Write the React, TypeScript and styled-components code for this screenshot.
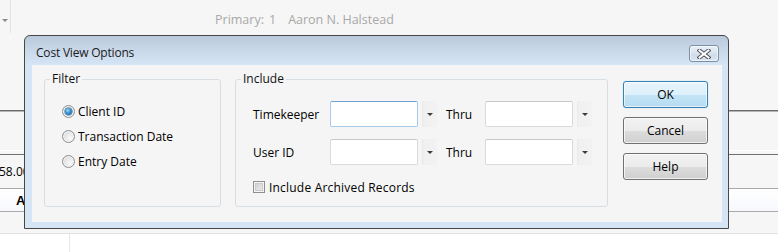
import React from "react";
import styled, { createGlobalStyle } from "styled-components";

const Global = createGlobalStyle`
  html, body { margin: 0; padding: 0; }
  body {
    background: #f6f6f6;
    font-family: "Open Sans", "Noto Sans", "DejaVu Sans", sans-serif;
    font-size: 12px;
    color: #000;
  }
  * { box-sizing: border-box; }
`;

const Page = styled.div`
  position: relative;
  width: 778px;
  height: 252px;
  overflow: hidden;
  background: #f6f6f6;
`;

/* ---------- background application ---------- */
const Backdrop = styled.div`
  display: flex;
  flex-direction: column;
  height: 100%;
`;

const TopBar = styled.div`
  display: flex;
  align-items: flex-start;
  height: 110px;
`;

const ComboStub = styled.div`
  width: 11px;
  height: 33px;
  border-right: 1px solid #e4e4e4;
  display: flex;
  align-items: center;
  justify-content: center;
  padding-top: 8px;
`;

const SmallArrow = styled.span`
  width: 0;
  height: 0;
  border-left: 3px solid transparent;
  border-right: 3px solid transparent;
  border-top: 3px solid #8a8a8a;
`;

const PrimaryLine = styled.div`
  display: flex;
  margin-left: 204px;
  padding-top: 10px;
  font-size: 12.5px;
  line-height: 20px;
  color: #a8a8a8;
`;

const PrimaryPart = styled.span<{ $gap: number }>`
  margin-left: ${(p) => p.$gap}px;
`;

const Rule = styled.div<{ $color: string; $under?: string }>`
  height: ${(p) => (p.$under ? 2 : 1)}px;
  border-top: 1px solid ${(p) => p.$color};
  ${(p) => (p.$under ? `border-bottom: 1px solid ${p.$under};` : "")}
`;

const Gap = styled.div<{ $h: number }>`
  height: ${(p) => p.$h}px;
`;

const DataRow = styled.div`
  height: 33px;
  display: flex;
  align-items: center;
  font-size: 12px;
  margin-left: -1px;
`;

const HeaderRow = styled.div`
  height: 22px;
  display: flex;
  align-items: center;
  padding-left: 16px;
  background: linear-gradient(#ffffff, #f7f8fc);
  font-weight: bold;
  font-size: 13px;
  font-family: "Liberation Sans", Arial, sans-serif;
`;

const Grid = styled.div`
  flex: 1;
  display: flex;
  background: #ffffff;
`;

const GridCell = styled.div`
  width: 70px;
  border-right: 1px solid #e6e6e6;
`;

/* ---------- dialog ---------- */
const Dialog = styled.div`
  position: absolute;
  left: 24px;
  top: 35px;
  width: 705px;
  height: 194px;
  display: flex;
  flex-direction: column;
  border: 1px solid #474747;
  border-radius: 6px 6px 0 0;
  background: linear-gradient(#b9c8da 0px, #c9d8e9 14px, #d6e5f5 29px, #d6e5f5 100%);
`;

const TitleBar = styled.div`
  height: 29px;
  flex: none;
  display: flex;
  align-items: flex-start;
  justify-content: space-between;
  padding: 9px 9px 0 11px;
`;

const Title = styled.div`
  font-size: 12px;
  line-height: 16px;
  color: #1b1b1b;
  letter-spacing: -0.2px;
`;

const CloseButton = styled.div`
  width: 30px;
  height: 17px;
  border: 1px solid #7d8fa6;
  border-radius: 3px;
  background: linear-gradient(#e9eff7, #d9e3ef 50%, #cfdbea 51%, #d9e4f1);
  box-shadow: inset 0 0 0 1px rgba(255, 255, 255, 0.55);
  display: flex;
  align-items: center;
  justify-content: center;
`;

const Body = styled.div`
  flex: 1;
  margin: 0 6px 6px 7px;
  background: #f5f5f5;
  display: flex;
  align-items: flex-start;
  padding: 6px 0 0 12px;
  gap: 14px;
`;

const Group = styled.fieldset<{ $w: number }>`
  width: ${(p) => p.$w}px;
  height: 136px;
  margin: 0;
  padding: 0;
  border: 1px solid #d6dde3;
  border-radius: 3px;
  min-width: 0;
`;

const Legend = styled.legend`
  margin-left: 5px;
  padding: 0 2px;
  font-size: 12px;
  line-height: 16px;
  color: #111;
`;

const RadioList = styled.div`
  display: flex;
  flex-direction: column;
  padding: 12px 0 0 17px;
`;

const RadioRow = styled.label`
  height: 25px;
  display: flex;
  align-items: center;
  gap: 3px;
  font-size: 12px;
`;

const RadioCircle = styled.span<{ $checked?: boolean }>`
  width: 13px;
  height: 13px;
  border-radius: 50%;
  border: 1px solid #8c8e90;
  flex: none;
  display: flex;
  align-items: center;
  justify-content: center;
  background: radial-gradient(circle at 65% 65%, #f9f9f9 0%, #e9e9e9 45%, #cfcfcf 100%);
  box-shadow: inset 0 0 0 1px #f4f4f4;
  &::after {
    content: "";
    display: ${(p) => (p.$checked ? "block" : "none")};
    width: 7px;
    height: 7px;
    border-radius: 50%;
    background: radial-gradient(circle at 40% 35%, #a8dcff 0%, #3a96d6 40%, #11598f 100%);
    box-shadow: 0 0 0 0.5px #2b5f86;
  }
`;

const IncludeContent = styled.div`
  display: flex;
  flex-direction: column;
  padding: 14px 0 0 17px;
`;

const FieldRow = styled.div`
  display: flex;
  align-items: center;
  height: 26px;
  margin-bottom: 12px;
`;

const FieldLabel = styled.span<{ $w: number }>`
  width: ${(p) => p.$w}px;
  flex: none;
  font-size: 12px;
`;

const TextBox = styled.input<{ $focused?: boolean }>`
  width: 88px;
  height: 26px;
  flex: none;
  margin: 0;
  padding: 0 3px;
  background: #fff;
  font: inherit;
  border: 1px solid ${(p) => (p.$focused ? "#a9cbe9" : "#dadada")};
  border-top-color: ${(p) => (p.$focused ? "#6fa3d1" : "#c9c9c9")};
  border-radius: 2px;
  outline: none;
`;

const DropButton = styled.div`
  width: 15px;
  height: 26px;
  flex: none;
  margin: 0 9px 0 4px;
  background: linear-gradient(90deg, #e9e9e9, #f0f0f0 2px, #f2f2f2);
  display: flex;
  align-items: center;
  justify-content: center;
  &::after {
    content: "";
    width: 0;
    height: 0;
    border-left: 3px solid transparent;
    border-right: 3px solid transparent;
    border-top: 3px solid #3c3c3c;
  }
`;

const CheckRow = styled.label`
  display: flex;
  align-items: center;
  gap: 4px;
  height: 16px;
  margin-top: 2px;
  font-size: 12px;
  letter-spacing: 0.2px;
`;

const CheckBox = styled.span`
  width: 12px;
  height: 12px;
  flex: none;
  border: 1px solid #8e8f8f;
  background: linear-gradient(135deg, #cbcbcb, #f2f2f2);
  box-shadow: inset 0 0 0 1px #f6f6f6, inset 0 0 0 2px #c9c9c9;
`;

const ButtonColumn = styled.div`
  display: flex;
  flex-direction: column;
  gap: 9px;
  margin-left: 1px;
  padding-top: 10px;
`;

const DialogButton = styled.button<{ $default?: boolean }>`
  width: 85px;
  height: 27px;
  margin: 0;
  padding: 0;
  font: inherit;
  font-size: 12px;
  color: #000;
  border-radius: 3px;
  border: 1px solid ${(p) => (p.$default ? "#3c7fb1" : "#707070")};
  background: ${(p) =>
    p.$default
      ? "linear-gradient(#e9f5fc, #dcf0fb 50%, #c3e4f6 51%, #b6dcf1)"
      : "linear-gradient(#f2f2f2, #ebebeb 50%, #dddddd 51%, #cfcfcf)"};
  box-shadow: ${(p) =>
    p.$default
      ? "inset 0 0 0 1px rgba(255,255,255,0.6), 0 0 1px #46c6f3"
      : "inset 0 0 0 1px rgba(255,255,255,0.7)"};
`;

const CloseGlyph = () => (
  <svg width="14" height="10" viewBox="0 0 14 10">
    <path d="M2.5 1.5 L11.5 8.5 M11.5 1.5 L2.5 8.5" stroke="#4b4f57" strokeWidth="4" strokeLinecap="square" />
    <path d="M2.5 1.5 L11.5 8.5 M11.5 1.5 L2.5 8.5" stroke="#ffffff" strokeWidth="2" strokeLinecap="square" />
  </svg>
);

export default function App() {
  return (
    <Page>
      <Global />
      <Backdrop>
        <TopBar>
          <ComboStub>
            <SmallArrow />
          </ComboStub>
          <PrimaryLine>
            <PrimaryPart $gap={0}>Primary:</PrimaryPart>
            <PrimaryPart $gap={5}>1</PrimaryPart>
            <PrimaryPart $gap={12}>Aaron N. Halstead</PrimaryPart>
          </PrimaryLine>
        </TopBar>
        <Rule $color="#6c6c6c" $under="#b4b4b4" />
        <Gap $h={38} />
        <Rule $color="#ffffff" />
        <Gap $h={3} />
        <Rule $color="#707070" />
        <DataRow>58.00</DataRow>
        <Rule $color="#a9a9a9" />
        <HeaderRow>Amount</HeaderRow>
        <Rule $color="#a9a9a9" />
        <Gap $h={21} />
        <Rule $color="#e2e2e2" />
        <Grid>
          <GridCell />
        </Grid>
      </Backdrop>

      <Dialog>
        <TitleBar>
          <Title>Cost View Options</Title>
          <CloseButton>
            <CloseGlyph />
          </CloseButton>
        </TitleBar>
        <Body>
          <Group $w={177}>
            <Legend>Filter</Legend>
            <RadioList>
              <RadioRow>
                <RadioCircle $checked />
                Client ID
              </RadioRow>
              <RadioRow>
                <RadioCircle />
                Transaction Date
              </RadioRow>
              <RadioRow>
                <RadioCircle />
                Entry Date
              </RadioRow>
            </RadioList>
          </Group>
          <Group $w={373}>
            <Legend>Include</Legend>
            <IncludeContent>
              <FieldRow>
                <FieldLabel $w={77}>Timekeeper</FieldLabel>
                <TextBox $focused readOnly />
                <DropButton />
                <FieldLabel $w={39}>Thru</FieldLabel>
                <TextBox readOnly />
                <DropButton />
              </FieldRow>
              <FieldRow>
                <FieldLabel $w={77}>User ID</FieldLabel>
                <TextBox readOnly />
                <DropButton />
                <FieldLabel $w={39}>Thru</FieldLabel>
                <TextBox readOnly />
                <DropButton />
              </FieldRow>
              <CheckRow>
                <CheckBox />
                Include Archived Records
              </CheckRow>
            </IncludeContent>
          </Group>
          <ButtonColumn>
            <DialogButton $default>OK</DialogButton>
            <DialogButton>Cancel</DialogButton>
            <DialogButton>Help</DialogButton>
          </ButtonColumn>
        </Body>
      </Dialog>
    </Page>
  );
}
